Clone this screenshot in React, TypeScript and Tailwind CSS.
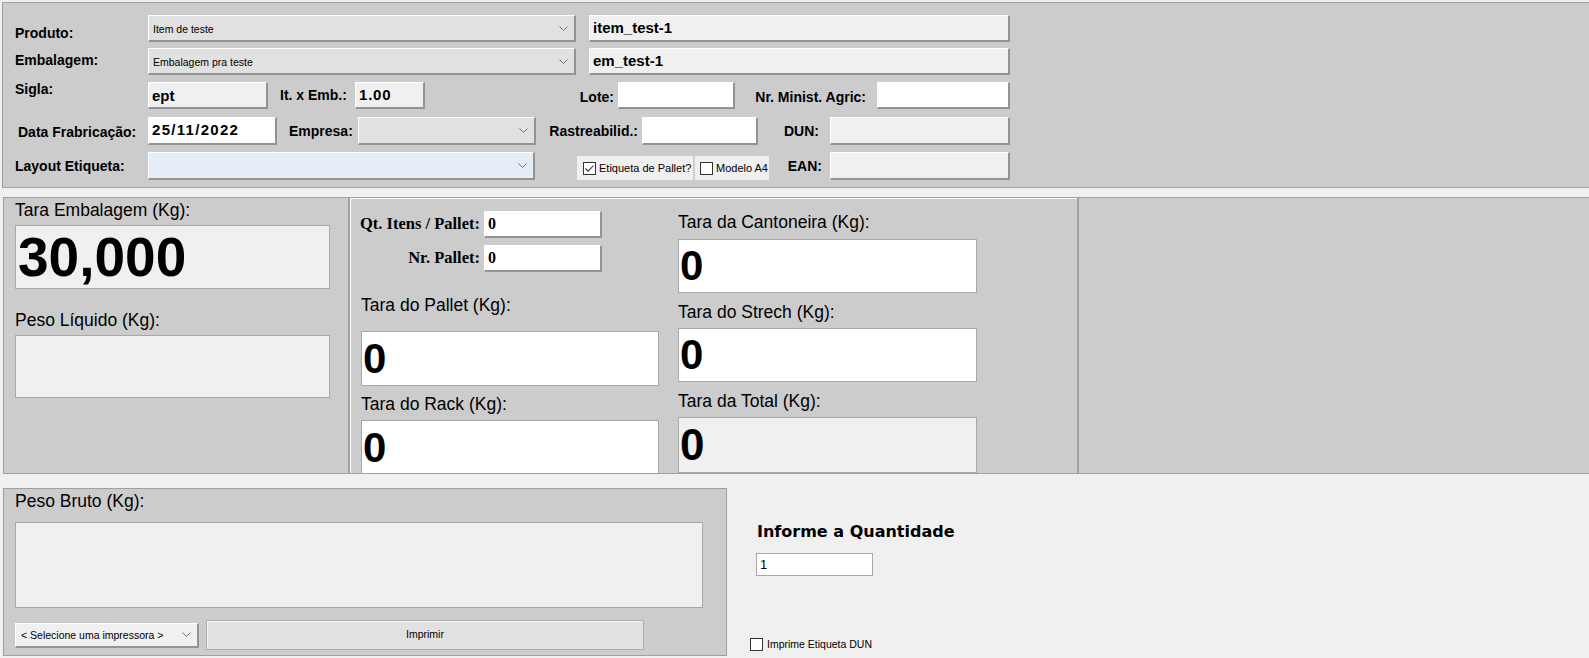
import React from "react";

const sans = "font-['Liberation_Sans',Arial,sans-serif]";

const Chevron = () => (
  <svg width="9" height="5" viewBox="0 0 9 5" className="shrink-0">
    <path d="M0.5 0.5 L4.5 4.5 L8.5 0.5" fill="none" stroke="#707070" strokeWidth="1" />
  </svg>
);

const CheckBox = ({ checked = false }: any) => (
  <span className="flex h-[13px] w-[13px] shrink-0 items-center justify-center border border-[#333333] bg-white">
    {checked && (
      <svg width="11" height="11" viewBox="0 0 11 11">
        <path d="M1.5 5.5 L4.2 8.2 L9.5 2.5" fill="none" stroke="#333333" strokeWidth="1.1" />
      </svg>
    )}
  </span>
);

// bold label used in the header form
const Label = ({ children, className = "" }: any) => (
  <div
    className={`flex shrink-0 whitespace-nowrap text-[14px] font-bold leading-[15px] text-black ${className}`}
  >
    {children}
  </div>
);

// raised combo box
const Combo = ({ text = "", className = "", bg = "bg-[#e1e1e1]" }: any) => (
  <div
    className={`flex shrink-0 items-center justify-between border-t border-l border-t-white border-l-white border-r-2 border-b-2 border-r-[#939393] border-b-[#939393] pl-[4px] pr-[6px] text-[10.5px] text-black ${bg} ${className}`}
  >
    <span className="whitespace-nowrap pt-[3px]">{text}</span>
    <Chevron />
  </div>
);

// raised text field
const Field = ({ value = "", className = "", bg = "bg-white" }: any) => (
  <div
    className={`flex shrink-0 items-center border-t border-l border-t-white border-l-white border-r-2 border-b-2 border-r-[#939393] border-b-[#939393] pl-[3px] text-[15px] font-bold text-black ${bg} ${className}`}
  >
    {value}
  </div>
);

// big numeric display box
const BigBox = ({ value = "", className = "", textSize = "text-[42px]" }: any) => (
  <div
    className={`flex shrink-0 items-center border border-[#a8a8a8] pl-[1px] ${className}`}
  >
    <span className={`font-bold leading-none text-black ${textSize}`}>{value}</span>
  </div>
);

const Caption = ({ children, className = "" }: any) => (
  <div className={`whitespace-nowrap text-[17.5px] leading-[20px] text-black ${className}`}>
    {children}
  </div>
);

export default function App() {
  return (
    <div className={`h-[658px] w-[1589px] overflow-hidden bg-[#f0f0f0] ${sans}`}>
      {/* header form */}
      <div className="ml-[2px] mt-[2px] h-[186px] border-t border-l border-b border-[#a0a0a0] bg-[#cccccc] pl-[12px]">
        {/* produto */}
        <div className="mt-[12px] flex h-[27px]">
          <Label className="w-[133px] items-start pt-[11px]">Produto:</Label>
          <Combo className="w-[428px]" text="Item de teste" />
          <Field className="ml-[13px] w-[421px]" bg="bg-[#f0f0f0]" value="item_test-1" />
        </div>

        {/* embalagem */}
        <div className="mt-[6px] flex h-[27px]">
          <Label className="w-[133px] items-start pt-[5px]">Embalagem:</Label>
          <Combo className="w-[428px]" text="Embalagem pra teste" />
          <Field className="ml-[13px] w-[421px]" bg="bg-[#f0f0f0]" value="em_test-1" />
        </div>

        {/* sigla / lote */}
        <div className="mt-[7px] flex h-[27px]">
          <Label className="w-[133px] items-start">Sigla:</Label>
          <Field className="w-[120px] pt-[2px]" bg="bg-[#f0f0f0]" value="ept" />
          <Label className="ml-[12px] w-[75px] items-center">It. x Emb.:</Label>
          <Field className="w-[70px] tracking-[0.8px]" bg="bg-[#f0f0f0]" value="1.00" />
          <Label className="w-[189px] items-center justify-end pt-[3px]">Lote:</Label>
          <Field className="ml-[4px] w-[117px]" />
          <Label className="w-[131px] items-center justify-end pt-[3px]">Nr. Minist. Agric:</Label>
          <Field className="ml-[11px] w-[133px]" />
        </div>

        {/* data / empresa */}
        <div className="mt-[8px] flex h-[28px]">
          <Label className="w-[133px] items-center pl-[3px] pt-[2px]">Data Frabricação:</Label>
          <Field className="w-[129px] tracking-[1.3px]" value="25/11/2022" />
          <Label className="ml-[12px] w-[69px] items-center">Empresa:</Label>
          <Combo className="w-[178px]" />
          <Label className="w-[102px] items-center justify-end">Rastreabilid.:</Label>
          <Field className="ml-[4px] w-[116px]" />
          <Label className="w-[61px] items-center justify-end">DUN:</Label>
          <Field className="ml-[11px] w-[180px]" bg="bg-[#f0f0f0]" />
        </div>

        {/* layout etiqueta */}
        <div className="mt-[7px] flex h-[28px]">
          <Label className="w-[133px] items-center">Layout Etiqueta:</Label>
          <Combo className="w-[387px]" bg="bg-[#e5eef7]" />
          <div className="ml-[42px] flex h-[24px] w-[116px] items-center self-end bg-[#f0f0f0] pl-[6px] text-[11px] text-black">
            <CheckBox checked />
            <span className="ml-[3px] whitespace-nowrap">Etiqueta de Pallet?</span>
          </div>
          <div className="ml-[2px] flex h-[24px] w-[74px] items-center self-end bg-[#f0f0f0] pl-[5px] text-[11px] text-black">
            <CheckBox />
            <span className="ml-[3px] whitespace-nowrap">Modelo A4</span>
          </div>
          <Label className="w-[53px] items-center justify-end">EAN:</Label>
          <Field className="ml-[8px] w-[180px]" bg="bg-[#f0f0f0]" />
        </div>
      </div>

      {/* weights */}
      <div className="mt-[9px] flex h-[277px]">
        {/* tara embalagem / peso liquido */}
        <div className="ml-[3px] w-[346px] shrink-0 overflow-hidden border border-[#a0a0a0] bg-[#cccccc] pl-[11px]">
          <Caption className="mt-[2px]">Tara Embalagem (Kg):</Caption>
          <BigBox className="mt-[5px] h-[64px] w-[315px] bg-[#f0f0f0] pl-[2px]" textSize="text-[55px]" value="30,000" />
          <Caption className="mt-[21px]">Peso Líquido (Kg):</Caption>
          <BigBox className="mt-[5px] h-[63px] w-[315px] bg-[#f0f0f0]" />
        </div>

        {/* pallet tares */}
        <div className="flex w-[729px] shrink-0 overflow-hidden border border-[#a0a0a0] bg-[#cccccc] pl-[11px] shadow-[inset_1px_1px_0_#ffffff]">
          <div className="flex w-[298px] flex-col">
            <div className="mt-[13px] flex h-[27px]">
              <div className="flex w-[119px] items-center justify-end whitespace-nowrap font-['Liberation_Serif',serif] text-[16.5px] font-bold text-black">
                Qt. Itens / Pallet:
              </div>
              <Field className="ml-[4px] w-[118px] font-['Liberation_Serif',serif] text-[16px]" value="0" />
            </div>
            <div className="mt-[7px] flex h-[27px]">
              <div className="flex w-[119px] items-center justify-end whitespace-nowrap font-['Liberation_Serif',serif] text-[16.5px] font-bold text-black">
                Nr. Pallet:
              </div>
              <Field className="ml-[4px] w-[118px] font-['Liberation_Serif',serif] text-[16px]" value="0" />
            </div>
            <Caption className="mt-[23px]">Tara do Pallet (Kg):</Caption>
            <BigBox className="mt-[16px] h-[55px] w-[298px] bg-white" value="0" />
            <Caption className="mt-[8px]">Tara do Rack (Kg):</Caption>
            <BigBox className="mt-[6px] h-[55px] w-[298px] bg-white" value="0" />
          </div>

          <div className="ml-[19px] flex w-[299px] flex-col">
            <Caption className="mt-[14px]">Tara da Cantoneira (Kg):</Caption>
            <BigBox className="mt-[7px] h-[54px] w-[299px] bg-white" value="0" />
            <Caption className="mt-[9px]">Tara do Strech (Kg):</Caption>
            <BigBox className="mt-[6px] h-[54px] w-[299px] bg-white" value="0" />
            <Caption className="mt-[9px]">Tara da Total (Kg):</Caption>
            <BigBox className="mt-[6px] h-[56px] w-[299px] bg-[#f0f0f0]" textSize="text-[44px]" value="0" />
          </div>
        </div>

        {/* empty area */}
        <div className="flex-1 border-t border-l border-b border-[#a0a0a0] bg-[#cccccc]" />
      </div>

      {/* bottom */}
      <div className="mt-[14px] flex h-[168px]">
        <div className="ml-[3px] flex w-[724px] shrink-0 flex-col border border-[#a0a0a0] bg-[#cccccc] pl-[11px]">
          <Caption className="mt-[2px]">Peso Bruto (Kg):</Caption>
          <BigBox className="mt-[11px] h-[86px] w-[688px] bg-[#f0f0f0]" />
          <div className="mt-[12px] flex h-[30px] items-center">
            <Combo className="h-[25px] w-[184px] pl-[5px]" bg="bg-[#f0f0f0]" text="< Selecione uma impressora >" />
            <button className="ml-[7px] flex h-[30px] w-[438px] items-center justify-center border border-[#adadad] bg-[#e1e1e1] text-[10.5px] text-black shadow-[inset_1px_1px_0_#f4f4f4]">
              Imprimir
            </button>
          </div>
        </div>

        {/* quantidade */}
        <div className="flex flex-col pl-[29px]">
          <div className="ml-[1px] mt-[34px] whitespace-nowrap font-['DejaVu_Sans',sans-serif] text-[16px] font-bold leading-[20px] text-black">
            Informe a Quantidade
          </div>
          <div className="mt-[11px] flex h-[23px] w-[117px] items-center border border-[#a8a8a8] bg-white pl-[3px] text-[13px] text-black">
            1
          </div>
          <div className="-ml-[6px] mt-[61px] flex items-center text-[10.5px] text-black">
            <CheckBox />
            <span className="ml-[4px] whitespace-nowrap">Imprime Etiqueta DUN</span>
          </div>
        </div>
      </div>
    </div>
  );
}
